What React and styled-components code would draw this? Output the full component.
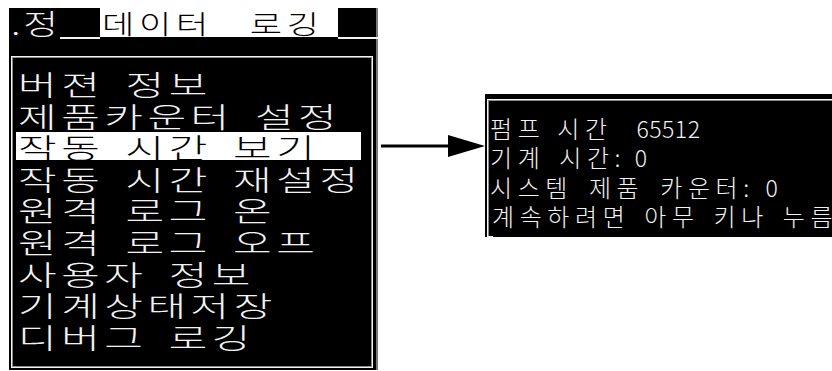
import styled, { createGlobalStyle } from "styled-components";

const Global = createGlobalStyle`
  html, body {
    margin: 0;
    padding: 0;
    background: #fff;
  }
  body {
    font-family: "Noto Sans CJK KR", "Noto Sans", sans-serif;
    font-weight: 300;
  }
`;

const Page = styled.div`
  display: flex;
  align-items: flex-start;
  width: 832px;
  height: 371px;
  padding: 8px 0 0 9px;
  box-sizing: border-box;
  overflow: hidden;
`;

const LeftPanel = styled.div`
  width: 369px;
  height: 362px;
  flex-shrink: 0;
  background: #000;
  display: flex;
  flex-direction: column;
  box-sizing: border-box;
  box-shadow: inset -2px 0 0 #7a7a7a;
`;

const HeaderRow = styled.div`
  display: flex;
  align-items: flex-start;
  height: 32px;
`;

const PrevTab = styled.div`
  width: 51px;
  height: 31px;
  padding-left: 2px;
  box-sizing: border-box;
  color: #f2f2f2;
  line-height: 30px;
  font-size: 28px;
`;

const TabLine = styled.div`
  width: ${(p) => (p.$grow ? "auto" : `${p.$w}px`)};
  flex: ${(p) => (p.$grow ? 1 : "none")};
  height: 31px;
  box-sizing: border-box;
  border-bottom: 2px solid #f2f2f2;
`;

const ActiveTab = styled.div`
  width: 238px;
  height: 29px;
  background: #fff;
  color: #000;
  padding-left: 2px;
  box-sizing: border-box;
  font-size: 26px;
  line-height: 29px;
`;

const Stretch = styled.span`
  display: inline-block;
  white-space: pre;
  transform: scaleX(${(p) => p.$x || 1.5});
  transform-origin: 0 50%;
  letter-spacing: ${(p) => p.$ls ?? 3}px;
  word-spacing: ${(p) => p.$ws ?? 5}px;
`;

const MenuBox = styled.div`
  margin: 16px 0 0 2px;
  width: 362px;
  height: 312px;
  box-sizing: border-box;
  border: 1px solid #f4f4f4;
  box-shadow: inset 1px 1px 0 #8a8a8a, inset -1px -1px 0 #8a8a8a;
  padding: 12px 0 0 4px;
`;

const MenuRow = styled.div`
  height: 31.6px;
  line-height: 30px;
  padding-left: 2px;
  font-size: 28px;
  color: ${(p) => (p.$active ? "#000" : "#f2f2f2")};
  background: ${(p) =>
    p.$active
      ? "linear-gradient(#fff, #fff) no-repeat 0 0 / 345px 28px"
      : "transparent"};
`;

const ArrowWrap = styled.div`
  width: 107px;
  margin-top: 126px;
  flex-shrink: 0;
  display: flex;
`;

const InfoBox = styled.div`
  margin-top: 86px;
  width: 420px;
  height: 143px;
  flex-shrink: 0;
  background: #000;
  padding: 5px 0 0 2px;
  box-sizing: border-box;
`;

const InfoFrame = styled.div`
  position: relative;
  height: 123px;
  border-top: 1px solid #f4f4f4;
  border-left: 1px solid #f4f4f4;
  box-shadow: inset 1px 1px 0 #8a8a8a;
  padding: 14px 0 0 2px;
  &::after {
    content: "";
    position: absolute;
    left: -1px;
    bottom: 0;
    width: 6px;
    height: 1px;
    background: #f4f4f4;
  }
`;

const InfoLine = styled.div`
  height: 29.3px;
  line-height: 28px;
  font-size: 24px;
  color: #f2f2f2;
  white-space: pre;
  letter-spacing: 5.6px;
  word-spacing: ${(p) => p.$ws ?? 3}px;
  padding-left: ${(p) => p.$pl || 0}px;
`;

const Num = styled.span`
  letter-spacing: 0.5px;
  font-size: 23px;
`;

const menu = [
  "버젼 정보",
  "제품카운터 설정",
  "작동 시간 보기",
  "작동 시간 재설정",
  "원격 로그 온",
  "원격 로그 오프",
  "사용자 정보",
  "기계상태저장",
  "디버그 로깅",
];

function Arrow() {
  return (
    <svg width="107" height="24" viewBox="0 0 107 24">
      <line x1="3" y1="12" x2="72" y2="12" stroke="#000" strokeWidth="3" />
      <polygon points="70,1 107,12 70,23" fill="#000" />
    </svg>
  );
}

export default function App() {
  return (
    <>
      <Global />
      <Page>
        <LeftPanel>
          <HeaderRow>
            <PrevTab>
              <Stretch $x={1.35} $ls={2}>.정</Stretch>
            </PrevTab>
            <TabLine $w={40} />
            <ActiveTab>
              <Stretch $x={1.35} $ls={3.5} $ws={18}>
                데이터 로깅
              </Stretch>
            </ActiveTab>
            <TabLine $grow />
          </HeaderRow>
          <MenuBox>
            {menu.map((item, i) => (
              <MenuRow key={item} $active={i === 2}>
                <Stretch>{item}</Stretch>
              </MenuRow>
            ))}
          </MenuBox>
        </LeftPanel>
        <ArrowWrap>
          <Arrow />
        </ArrowWrap>
        <InfoBox>
          <InfoFrame>
            <InfoLine $ws={1}>
              펌프 시간  <Num>65512</Num>
            </InfoLine>
            <InfoLine>
              기계 시간:<Num> 0</Num>
            </InfoLine>
            <InfoLine $ws={5}>
              시스템 제품 카운터:<Num> 0</Num>
            </InfoLine>
            <InfoLine $pl={2}>계속하려면 아무 키나 누름</InfoLine>
          </InfoFrame>
        </InfoBox>
      </Page>
    </>
  );
}
